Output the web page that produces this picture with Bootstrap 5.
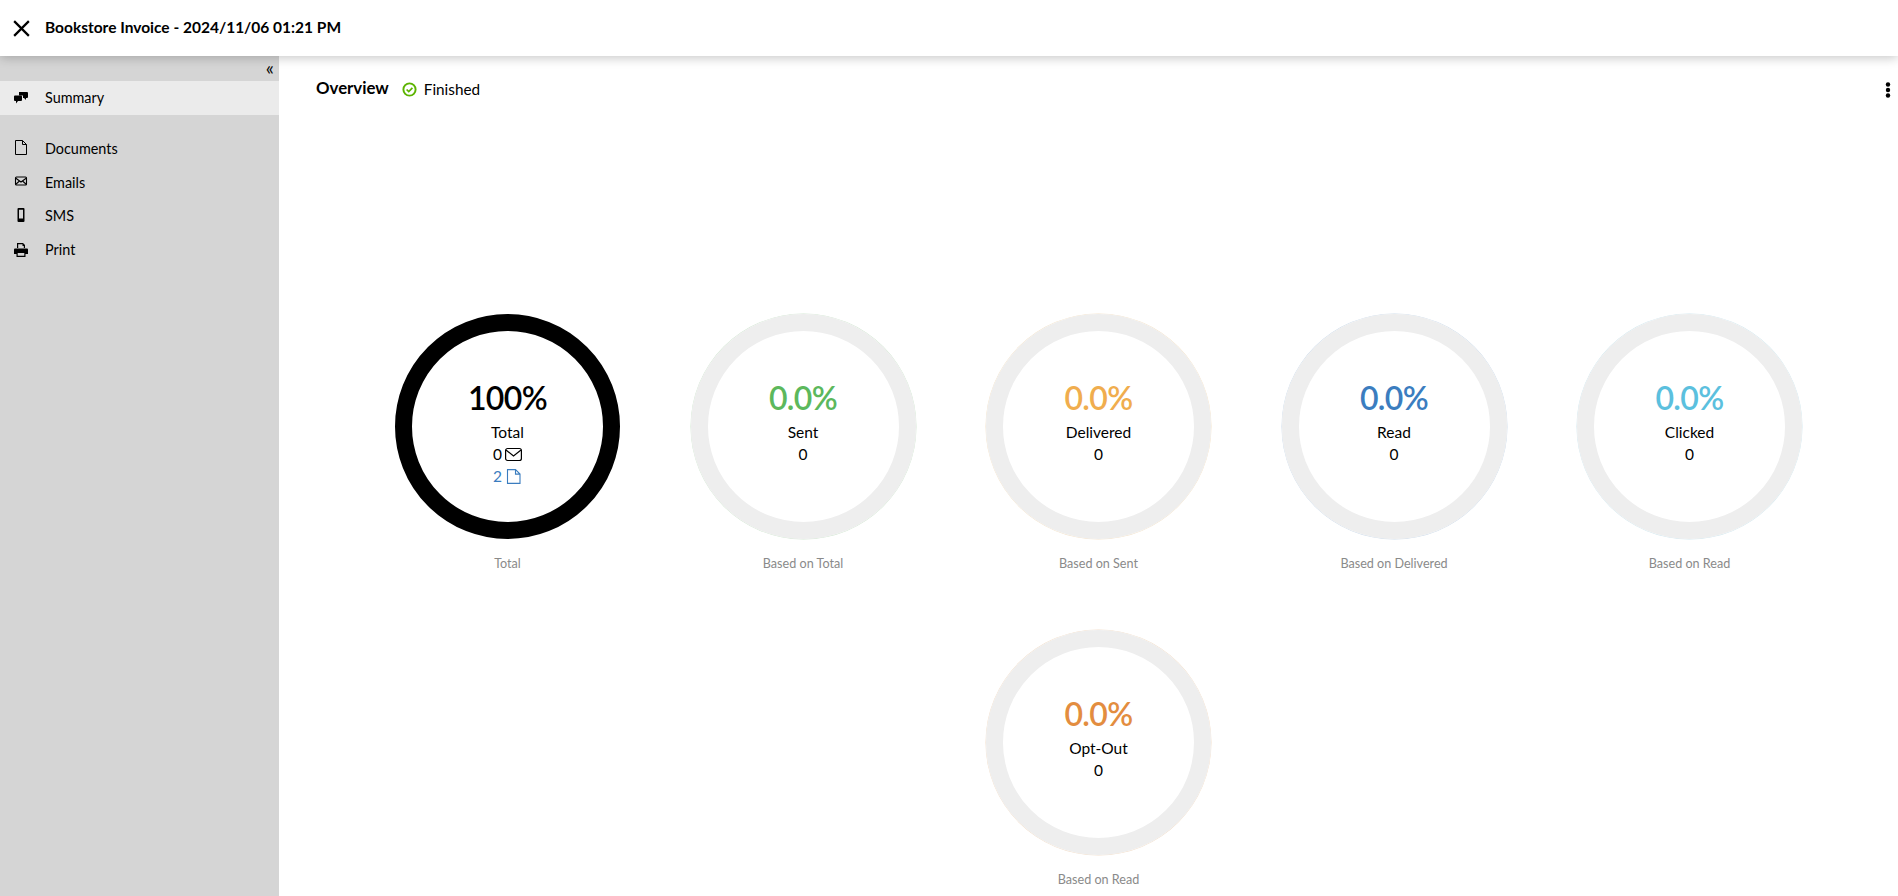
<!DOCTYPE html>
<html lang="en">
<head>
  <meta charset="UTF-8" />
  <meta name="viewport" content="width=device-width, initial-scale=1" />
  <title>Bookstore Invoice</title>
  <link href="https://cdn.jsdelivr.net/npm/bootstrap@5.3.3/dist/css/bootstrap.min.css" rel="stylesheet" />
  <style>
    html, body { height: 100%; }
    body { font-family: Lato, "Liberation Sans", sans-serif; font-size: 15px; color: #000; overflow: hidden; }
    .top-bar { height: 56px; padding-left: 11px; box-shadow: 0 2px 10px rgba(0,0,0,.22); z-index: 2; }
    .top-title { font-size: 15.5px; font-weight: 700; margin-left: 13px; }
    .close-btn { width: 21px; height: 21px; }
    .side-bar { width: 279px; background: #d5d5d5; }
    .collapse-row { height: 25px; padding-right: 5px; font-size: 19px; line-height: 24px; }
    .side-item { height: 33.6px; padding-left: 14px; color: #000; text-decoration: none; font-size: 14.4px; }
    .side-item.on { height: 34px; background: #ebebeb; margin-bottom: 17px; }
    .side-ico { width: 14px; height: 14px; margin-right: 17px; flex: none; overflow: visible; }
    .over-head { padding: 22px 7px 0 37px; height: 47px; }
    .over-title { font-size: 16.8px; font-weight: 700; line-height: 20px; }
    .over-state { font-size: 15.3px; margin-left: 13px; line-height: 22px; }
    .state-label { margin-left: 3px; }
    .stat-wrap { padding-left: 20px; margin-top: 211px; }
    .stat-cell { width: 295.5px; height: 316px; }
    .ring { width: 225px; height: 225px; border-radius: 50%; border: 17px solid #eee; padding-top: 47px; line-height: 22px; font-size: 15.5px; }
    .ring.full { border-color: #000; }
    .ring-sent { box-shadow: 0 0 0 .5px #d3e6d3; }
    .ring-deliv { box-shadow: 0 0 0 .5px #f3e3cc; }
    .ring-read { box-shadow: 0 0 0 .5px #cfdcea; }
    .ring-click { box-shadow: 0 0 0 .5px #d2e7ee; }
    .ring-opt { box-shadow: 0 0 0 .5px #f2dfcc; }
    .pct { font-size: 32px; font-weight: 600; letter-spacing: -.6px; line-height: 39px; margin-bottom: 4px; }
    .cap { margin-top: 15px; color: #8a8a8a; font-size: 12.6px; line-height: 20px; }
    .c-sent { color: #5cb85c; } .c-deliv { color: #f0ad4e; } .c-read { color: #3b7dbf; }
    .c-click { color: #5bc0de; } .c-opt { color: #e38d3f; } .c-doc { color: #3b7dbf; }
    .ring-ico { width: 17px; height: 15px; margin-left: 3px; vertical-align: -2px; }
  </style>
</head>
<body class="d-flex flex-column">
  <header class="top-bar d-flex align-items-center bg-white position-relative flex-shrink-0">
    <svg class="close-btn" viewBox="0 0 20 20" fill="none" stroke="#000" stroke-width="2.100"><path d="M3 3l14 14M17 3L3 17"/></svg>
    <span class="top-title">Bookstore Invoice - 2024/11/06 01:21 PM</span>
  </header>
  <div class="d-flex flex-grow-1 overflow-hidden">
    <nav class="side-bar flex-shrink-0">
      <div class="collapse-row text-end">«</div>
      <a class="side-item on d-flex align-items-center" href="#">
        <svg class="side-ico" viewBox="0 0 14 14" fill="#000"><path d="M5 1h8a1 1 0 0 1 1 1v4a1 1 0 0 1-1 1h-1v2l-2-2H9V4.500H5z"/><path d="M1 4.500h6a1 1 0 0 1 1 1V9a1 1 0 0 1-1 1H4l-2 2.500V10H1a1 1 0 0 1-1-1V5.500a1 1 0 0 1 1-1z"/></svg>
        Summary
      </a>
      <a class="side-item d-flex align-items-center" href="#">
        <svg class="side-ico" viewBox="0 0 14 14" fill="none" stroke="#000" stroke-width="1"><path d="M1.500-1.500h7l4 4v10h-11zM8.500-1.500v4h4"/></svg>
        Documents
      </a>
      <a class="side-item d-flex align-items-center" href="#">
        <svg class="side-ico" viewBox="0 0 14 14" fill="none" stroke="#000" stroke-width="1.100"><rect x="1.500" y="2" width="11" height="8" rx="1"/><path d="M1.500 3l5.500 4 5.500-4M1.500 9.500l4-3.500M12.500 9.500l-4-3.500"/></svg>
        Emails
      </a>
      <a class="side-item d-flex align-items-center" href="#">
        <svg class="side-ico" viewBox="0 0 14 14" fill="#000"><path fill-rule="evenodd" d="M4.500-1h5a1 1 0 0 1 1 1v12a1 1 0 0 1-1 1h-5a1 1 0 0 1-1-1V0a1 1 0 0 1 1-1zM5 .800v8.700h4V.800z"/></svg>
        SMS
      </a>
      <a class="side-item d-flex align-items-center" href="#">
        <svg class="side-ico" viewBox="0 0 14 14" fill="#000"><path fill-rule="evenodd" d="M3 0h6l2 2v3H9.800V3H8.500V1.300H4.200V5H3zM1 5.500h12a1 1 0 0 1 1 1V11h-2.500v3h-9v-3H0V6.500a1 1 0 0 1 1-1zM3.700 10v2.800h6.600V10z"/></svg>
        Print
      </a>
    </nav>
    <main class="flex-grow-1 bg-white">
      <div class="over-head d-flex align-items-start">
        <span class="over-title">Overview</span>
        <span class="over-state d-inline-flex align-items-center">
          <svg width="15" height="15" viewBox="0 0 14 14" fill="none" class="me-1"><circle cx="7" cy="7" r="5.700" stroke="#5cb300" stroke-width="1.800"/><path d="M4.300 7l2 2 3.400-3.500" stroke="#5cb300" stroke-width="1.600"/></svg>
          <span class="state-label">Finished</span>
        </span>
        <svg class="ms-auto mt-1" width="6" height="16" viewBox="0 0 6 16" fill="#000"><circle cx="3" cy="2.500" r="2.200"/><circle cx="3" cy="8" r="2.200"/><circle cx="3" cy="13.500" r="2.200"/></svg>
      </div>
      <div class="stat-wrap d-flex flex-wrap justify-content-center">
        <div class="stat-cell d-flex flex-column align-items-center">
          <div class="ring full text-center">
            <div class="pct">100%</div>
            <div>Total</div>
            <div>0<svg class="ring-ico" viewBox="0 0 17 15" fill="none" stroke="#000" stroke-width="1.200"><rect x=".6" y="1.500" width="15.800" height="12" rx="2"/><path d="M1 3l7.500 6L16 3"/></svg></div>
            <div class="c-doc">2<svg class="ring-ico" viewBox="0 0 17 15" fill="none" stroke="#3b7dbf" stroke-width="1.100"><path d="M2.500.6h8l4.500 4.500v9.300H2.500zM10.500.6v4.500H15"/></svg></div>
          </div>
          <div class="cap">Total</div>
        </div>
        <div class="stat-cell d-flex flex-column align-items-center">
          <div class="ring ring-sent text-center"><div class="pct c-sent">0.0%</div><div>Sent</div><div>0</div></div>
          <div class="cap">Based on Total</div>
        </div>
        <div class="stat-cell d-flex flex-column align-items-center">
          <div class="ring ring-deliv text-center"><div class="pct c-deliv">0.0%</div><div>Delivered</div><div>0</div></div>
          <div class="cap">Based on Sent</div>
        </div>
        <div class="stat-cell d-flex flex-column align-items-center">
          <div class="ring ring-read text-center"><div class="pct c-read">0.0%</div><div>Read</div><div>0</div></div>
          <div class="cap">Based on Delivered</div>
        </div>
        <div class="stat-cell d-flex flex-column align-items-center">
          <div class="ring ring-click text-center"><div class="pct c-click">0.0%</div><div>Clicked</div><div>0</div></div>
          <div class="cap">Based on Read</div>
        </div>
        <div class="stat-cell d-flex flex-column align-items-center">
          <div class="ring ring-opt text-center"><div class="pct c-opt">0.0%</div><div>Opt-Out</div><div>0</div></div>
          <div class="cap">Based on Read</div>
        </div>
      </div>
    </main>
  </div>
  <script src="https://cdn.jsdelivr.net/npm/bootstrap@5.3.3/dist/js/bootstrap.bundle.min.js"></script>
</body>
</html>
